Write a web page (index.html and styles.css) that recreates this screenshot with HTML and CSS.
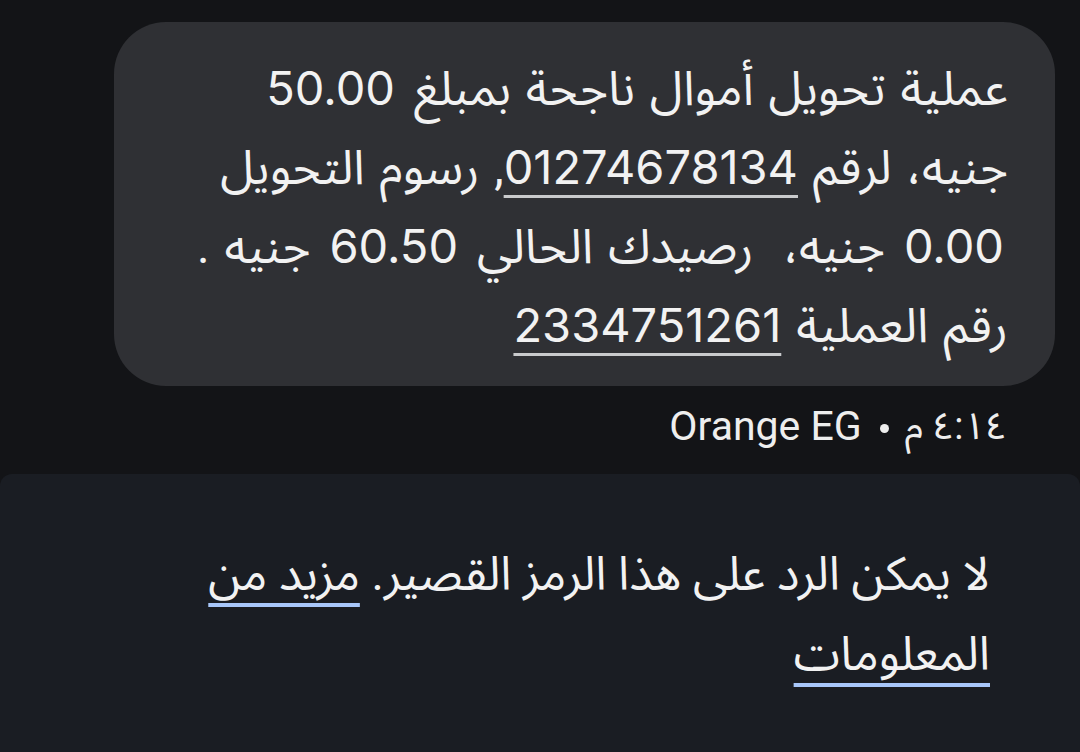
FILE: index.html
```html
<!DOCTYPE html>
<html lang="ar" dir="rtl">
<head>
<meta charset="utf-8">
<title>Orange EG</title>
<link rel="stylesheet" href="styles.css">
</head>
<body>
<main class="screen">
  <section class="thread">
    <div class="bubble">
      <p class="msg">عملية تحويل أموال ناجحة بمبلغ <span class="amt">50.00</span><br>جنيه، لرقم <span class="num">01274678134</span>, رسوم التحويل<br><span class="amt">0.00</span> جنيه،&nbsp; رصيدك الحالي <span class="amt">60.50</span> جنيه .<br>رقم العملية <span class="num">2334751261</span></p>
    </div>
    <div class="meta">
      <span class="time">٤:١٤ م</span>
      <span class="dot"></span>
      <span class="sender" dir="ltr">Orange EG</span>
    </div>
  </section>
  <footer class="notice">
    <p class="notice-text">لا يمكن الرد على هذا الرمز القصير. <a class="link" href="#">مزيد من<br>المعلومات</a></p>
  </footer>
</main>
</body>
</html>
```
FILE: styles.css
```css
html, body {
  margin: 0;
  padding: 0;
  background: #131417;
}

.screen {
  width: 1080px;
  height: 752px;
  overflow: hidden;
  display: flex;
  flex-direction: column;
  font-family: Roboto, "Noto Sans Arabic", "Noto Naskh Arabic", "DejaVu Sans", sans-serif;
  color: #f2f2f2;
}

.thread {
  height: 474px;
  box-sizing: border-box;
  padding: 22px 25px 0 114px;
  display: flex;
  flex-direction: column;
}

.bubble {
  background: #2f3034;
  border-radius: 52px;
  padding: 27px 47px 21px 40px;
}

.msg {
  margin: 0;
  font-size: 48px;
  line-height: 78px;
  text-align: right;
  white-space: nowrap;
  word-spacing: 3px;
}

.amt {
  font-family: Inter, Roboto, sans-serif;
  font-size: 47px;
  letter-spacing: 2px;
  padding: 0 4px;
}

.num {
  font-family: Inter, Roboto, sans-serif;
  font-size: 47px;
  letter-spacing: -1px;
  text-decoration: underline;
  text-decoration-color: #c9cacc;
  text-decoration-thickness: 3px;
  text-underline-offset: 11px;
}

.meta {
  margin-top: 16px;
  margin-right: 48px;
  display: flex;
  align-items: center;
  gap: 14px;
  font-size: 41px;
  line-height: 48px;
  color: #eeeeee;
}

.time {
  font-size: 38px;
  letter-spacing: -1px;
}

.dot {
  width: 9px;
  height: 9px;
  border-radius: 50%;
  background: #eeeeee;
  margin: 4px 2px 0 4px;
}

.notice {
  flex: 1;
  background: #1a1d23;
  border-radius: 12px 12px 0 0;
  padding: 60px 90px 0 150px;
}

.notice-text {
  margin: 0;
  font-size: 47px;
  line-height: 80px;
  text-align: right;
}

.link {
  color: #f2f2f2;
  text-decoration: underline;
  text-decoration-color: #a8c7fa;
  text-decoration-thickness: 4px;
  text-underline-offset: 13px;
}
```
